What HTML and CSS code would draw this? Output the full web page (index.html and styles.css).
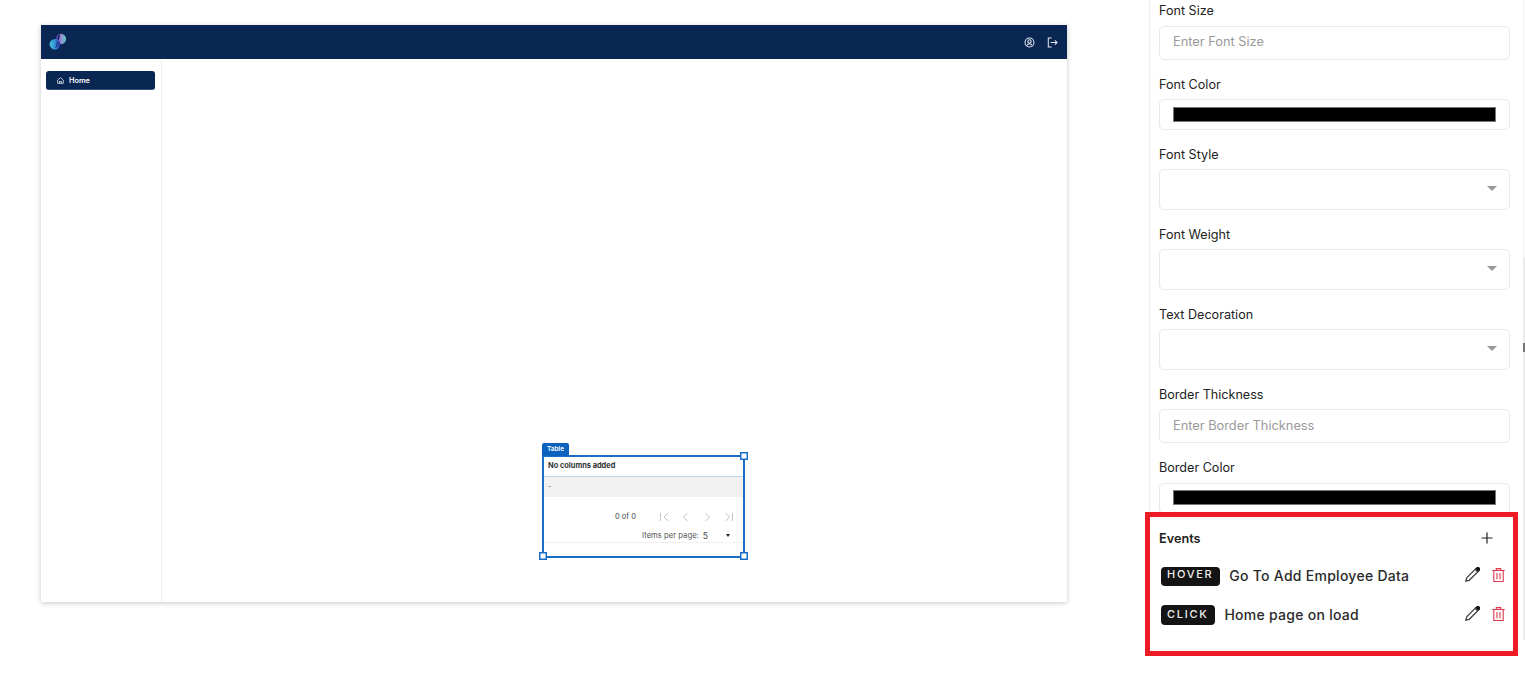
FILE: index.html
```html
<!DOCTYPE html>
<html lang="en">
<head>
<meta charset="utf-8">
<title>Page builder</title>
<link rel="stylesheet" href="styles.css">
</head>
<body>
<div class="page">
  <main class="stage">
    <div class="app">
      <header class="topbar">
        <svg class="logo" viewBox="0 0 18 18" width="18" height="18">
          <defs>
            <linearGradient id="lg1" x1="0" y1="0" x2="1" y2="0"><stop offset="0" stop-color="#45c3dc"/><stop offset=".6" stop-color="#2f86cf"/><stop offset="1" stop-color="#2a2a90"/></linearGradient>
            <linearGradient id="lg2" x1="0" y1="0" x2="1" y2="0"><stop offset="0" stop-color="#3a2a9a"/><stop offset=".45" stop-color="#9a7fd8"/><stop offset="1" stop-color="#63d2bd"/></linearGradient>
          </defs>
          <circle cx="11.800" cy="6" r="5.200" fill="url(#lg2)"/>
          <circle cx="6" cy="11.300" r="5.400" fill="url(#lg1)"/>
          <path d="M7.800 7.500c1.400 1.500 1.200 4.600-.6 7l-1 .4c1.600-2.600 1.800-5.400 1.600-7.400z" fill="#1c1d6e"/>
          <path d="M9.800 1.600c-1.300 1.800-1.200 4.300-.4 5.900 1-.9.800-4 1.900-6.100z" fill="#0a2653"/>
        </svg>
        <div class="topicons">
          <svg viewBox="0 0 12 12" width="11" height="11" fill="none" stroke="#e6ebf2" stroke-width="1.100">
            <circle cx="6" cy="6" r="4.900"/><circle cx="6" cy="4.800" r="1.800"/><path d="M2.900 9.400c.8-1.500 1.900-2 3.100-2s2.300.5 3.100 2"/>
          </svg>
          <svg viewBox="0 0 12 12" width="11" height="11" fill="none" stroke="#e6ebf2" stroke-width="1.100">
            <path d="M5 1.200H1.400v9.600H5"/><path d="M4 6h7M8.600 3.600 11 6 8.600 8.400"/>
          </svg>
        </div>
      </header>
      <div class="appbody">
        <nav class="sidebar">
          <a class="navitem">
            <svg viewBox="0 0 10 10" width="7" height="7" fill="none" stroke="#fff" stroke-width="1">
              <path d="M1 4.300 5 1l4 3.300V9H1z"/><path d="M3.600 9V6.400h2.800V9"/>
            </svg>
            <span>Home</span>
          </a>
        </nav>
        <section class="canvas">
          <div class="widget">
            <span class="tag">Table</span>
            <i class="handle h-tr"></i><i class="handle h-bl"></i><i class="handle h-br"></i>
            <div class="thead">No columns added</div>
            <div class="trow">-</div>
            <div class="pager">
              <span class="count">0 of 0</span>
              <svg viewBox="0 0 76 10" width="76" height="10" fill="none" stroke="#c2c5ca" stroke-width="1">
                <path d="M3.500 1v8M11 1 7 5l4 4"/>
                <path d="M30.500 1 26.500 5l4 4"/>
                <path d="M48.500 1 52.500 5l-4 4"/>
                <path d="M68.500 1 72.500 5l-4 4M75.500 1v8"/>
              </svg>
            </div>
            <div class="perpage">
              <span class="plabel">Items per page:</span>
              <span class="pvalue">5</span>
              <i class="pcaret"></i>
            </div>
          </div>
        </section>
      </div>
    </div>
  </main>

  <aside class="panel">
    <div class="field f-size"><label>Font Size</label><div class="box input">Enter Font Size</div></div>
    <div class="field f-color"><label>Font Color</label><div class="box color"><i class="swatch"></i></div></div>
    <div class="field f-select"><label>Font Style</label><div class="box select"><i class="caret"></i></div></div>
    <div class="field f-select"><label>Font Weight</label><div class="box select"><i class="caret"></i></div></div>
    <div class="field f-select"><label>Text Decoration</label><div class="box select"><i class="caret"></i></div></div>
    <div class="field f-thick"><label>Border Thickness</label><div class="box input">Enter Border Thickness</div></div>
    <div class="field f-border"><label>Border Color</label><div class="box color"><i class="swatch"></i></div></div>
  </aside>
  <i class="scrollthumb"></i>

  <section class="events">
    <div class="ehead">
      <span>Events</span>
      <svg viewBox="0 0 12 12" width="12" height="12" fill="none" stroke="#222" stroke-width="1.200"><path d="M6 .5v11M.5 6h11"/></svg>
    </div>
    <div class="erow r1">
      <span class="badge">HOVER</span>
      <span class="ename">Go To Add Employee Data</span>
      <svg class="pencil" viewBox="0 0 16 16" width="16" height="16" fill="none" stroke="#444" stroke-width="1.300"><path d="M1.800 14.200l.9-3.400 8.400-8.400 2.500 2.500-8.400 8.400z" fill="#fff"/><path d="M12 1.600l2.400 2.400 .9-.9c.5-.6.500-1.200 0-1.700l-.6-.6c-.5-.5-1.200-.5-1.700 0z" fill="#111" stroke="#111"/></svg>
      <svg class="trash" viewBox="0 0 13 14" width="13" height="14" fill="none" stroke="#e0364a" stroke-width="1.100"><path d="M.3 2.500h12.400M4.300 2.300V.6h4.400v1.700M1.800 2.700v10.800h9.400V2.700M5 5v6.200M8 5v6.200"/></svg>
    </div>
    <div class="erow r2">
      <span class="badge badge-tall">CLICK</span>
      <span class="ename">Home page on load</span>
      <svg class="pencil" viewBox="0 0 16 16" width="16" height="16" fill="none" stroke="#444" stroke-width="1.300"><path d="M1.800 14.200l.9-3.400 8.400-8.400 2.500 2.500-8.400 8.400z" fill="#fff"/><path d="M12 1.600l2.400 2.400 .9-.9c.5-.6.500-1.200 0-1.700l-.6-.6c-.5-.5-1.200-.5-1.700 0z" fill="#111" stroke="#111"/></svg>
      <svg class="trash" viewBox="0 0 13 14" width="13" height="14" fill="none" stroke="#e0364a" stroke-width="1.100"><path d="M.3 2.500h12.400M4.300 2.300V.6h4.400v1.700M1.800 2.700v10.800h9.400V2.700M5 5v6.200M8 5v6.200"/></svg>
    </div>
  </section>
</div>
</body>
</html>
```

FILE: styles.css
```css
* { box-sizing: border-box; }
html, body { margin: 0; height: 100%; overflow: hidden; background: #fff; }
body { font-family: Inter, "Liberation Sans", sans-serif; color: #222; }

.page { position: relative; display: flex; align-items: flex-start; width: 1525px; height: 678px; overflow: hidden; }

/* Canvas side */
.stage { width: 1149px; padding: 25px 0 0 41px; flex: none; }
.app { width: 1026px; height: 577px; display: flex; flex-direction: column; background: #fff; box-shadow: 0 1px 5px rgba(0,0,0,.22); }
.topbar { height: 34px; background: #0a2653; display: flex; align-items: center; justify-content: space-between; padding: 0 9px 0 8px; flex: none; }
.logo { display: block; }
.topicons { display: flex; gap: 12px; }
.topicons svg { display: block; }
.appbody { flex: 1; display: flex; min-height: 0; }
.sidebar { width: 121px; flex: none; border-right: 1px solid #eeeff1; padding: 12px 6px 0 5px; }
.navitem { height: 19px; background: #0a2653; border-radius: 3px; display: flex; align-items: center; gap: 5px; padding-left: 11px; color: #fff; font-size: 7.300px; font-weight: 600; border-bottom: 1px solid #33507c; }
.navitem svg { display: block; }
.canvas { position: relative; flex: 1; }

/* Selected table widget */
.widget { position: absolute; left: 380px; top: 396px; width: 203px; height: 103px; border: 2px solid #1a6ec6; background: #fff; }
.tag { position: absolute; left: -2px; top: -14px; height: 13px; padding: 0 5px; background: #0b62bd; color: #fff; font-size: 6.500px; font-weight: 600; line-height: 13px; border-radius: 2px 2px 0 0; }
.handle { position: absolute; width: 8px; height: 8px; background: #fff; border: 1px solid #1a6ec6; box-shadow: inset 0 0 0 .5px #1a6ec6; }
.h-tr { right: -5px; top: -5px; }
.h-bl { left: -5px; bottom: -4px; }
.h-br { right: -5px; bottom: -4px; }
.thead { height: 20px; border-bottom: 1px solid #b9d3ea; padding-left: 4px; font-size: 7.400px; font-weight: 700; line-height: 17px; color: #333; }
.trow { height: 20px; background: #f1f1f1; padding-left: 4px; font-size: 7px; line-height: 20px; color: #666; }
.pager { display: flex; align-items: center; justify-content: flex-end; height: 19px; margin-top: 10px; padding-right: 10px; gap: 21px; }
.count { font-size: 7.500px; color: #444; }
.perpage { display: flex; align-items: center; justify-content: flex-end; height: 14px; margin-top: 3px; padding-right: 13px; border-bottom: 1px solid #f0f0f0; }
.plabel { font-size: 7.700px; color: #555; }
.pvalue { font-size: 8.500px; color: #444; margin-left: 4px; margin-right: 18px; }
.pcaret { width: 0; height: 0; border-left: 2.500px solid transparent; border-right: 2.500px solid transparent; border-top: 3px solid #222; }

/* Properties panel */
.panel { width: 375px; flex: none; height: 520px; border-left: 1px solid #eeeeee; border-right: 1px solid #f2f2f2; padding: 3px 14px 0 9px; font-size: 12.600px; }
.field label { display: block; line-height: 15px; color: #222; margin-bottom: 8px; }
.box { width: 351px; border: 1px solid #e8e8e8; border-radius: 5px; background: #fff; display: flex; align-items: center; }
.input { height: 34px; padding: 0 0 3px 13px; color: #9a9a9a; font-size: 12.800px; }
.color { height: 31px; padding: 0 13px; }
.swatch { display: block; width: 100%; height: 15px; background: #000; border: 1px solid #777; }
.select { height: 41px; justify-content: flex-end; padding: 0 12px 2px 0; }
.caret { width: 0; height: 0; border-left: 5.500px solid transparent; border-right: 5.500px solid transparent; border-top: 5px solid #999; }
.f-size { margin-bottom: 17px; }
.f-color { margin-bottom: 17px; }
.field.f-color label { margin-bottom: 7px; }
.f-select { margin-bottom: 17px; }
.f-select label { margin-bottom: 7px; }
.f-thick { margin-bottom: 17px; }
.f-thick label { margin-bottom: 7px; }
.f-thick .input { padding-bottom: 1px; }
.f-border .color { padding-bottom: 2px; }

/* Overlay scrollbar remnant at the window's edge */
.scrollthumb { position: absolute; left: 1523px; top: 258px; width: 2px; height: 382px; background: #ececec; }
.scrollthumb::after { content: ""; position: absolute; left: 0; top: 85px; width: 2px; height: 9px; background: #777; }

/* Annotated events box, lies over the panel's bottom */
.events { position: absolute; left: 1145px; top: 512px; width: 373px; height: 144px; background: #fff; border: 5px solid #ed1c24; padding: 0 8px 0 9px; }
.ehead { display: flex; align-items: center; justify-content: space-between; height: 20px; margin-top: 11px; padding-right: 12px; font-size: 12.700px; font-weight: 600; color: #222; }
.ehead svg { display: block; }
.erow { display: flex; align-items: center; height: 20px; padding-left: 2px; }
.r1 { margin-top: 17px; }
.r2 { margin-top: 19px; }
.badge { background: #141414; color: #eee; font-size: 11px; font-weight: 500; letter-spacing: 1.700px; height: 19px; line-height: 15px; padding: 0 7px 0 6px; margin-top: 2px; border-radius: 4px; flex: none; }
.badge-tall { height: 20px; line-height: 18px; }
.ename { font-size: 14px; font-weight: 500; color: #2a2a2a; margin: 1px 0 0 9px; flex: 1; letter-spacing: .27px; }
.pencil { flex: none; display: block; margin-right: 12px; }
.trash { flex: none; display: block; }
```
